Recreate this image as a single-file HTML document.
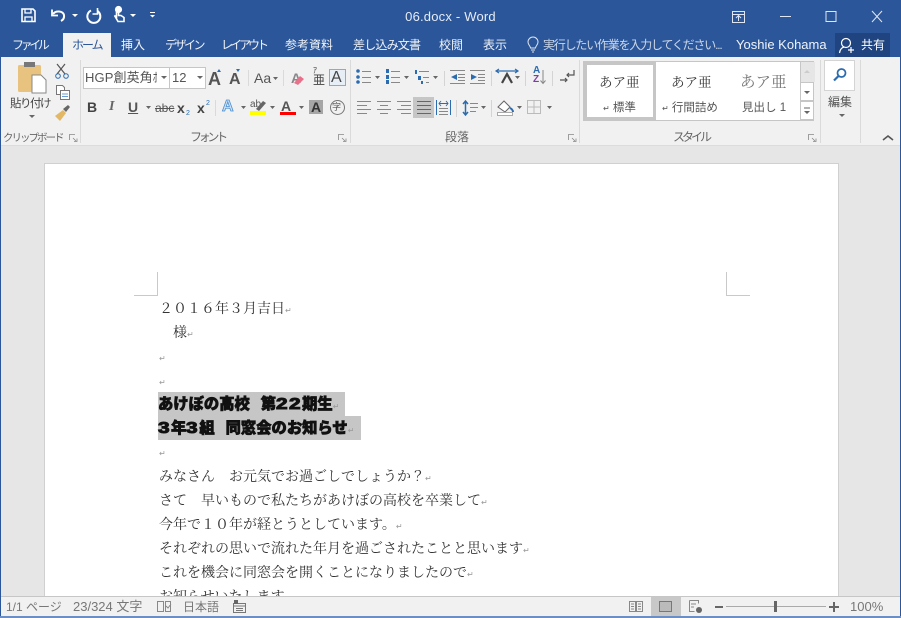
<!DOCTYPE html>
<html lang="ja"><head><meta charset="utf-8">
<style>
html,body{margin:0;padding:0}
body{width:901px;height:618px;overflow:hidden;position:relative;background:#e6e6e6;font-family:"Liberation Sans","Noto Sans CJK JP",sans-serif;font-size:12px;color:#444}
div,svg{position:absolute}
.t{white-space:nowrap;line-height:16px}
.tab{color:#fff;top:37px;font-size:12px;line-height:16px;white-space:nowrap;opacity:.93}
.m{font-family:"Liberation Serif","Noto Serif CJK SC",serif;font-size:14px;color:#333;left:159px;line-height:20px;white-space:nowrap}
.r{font-size:8px;color:#999;font-family:"Liberation Sans",sans-serif;font-weight:normal;-webkit-text-stroke:0}
.h{font-family:"Liberation Sans","Noto Sans CJK JP",sans-serif;font-weight:900;font-size:15.3px;color:#111;left:158px;line-height:24px;white-space:nowrap;-webkit-text-stroke:.7px #111}
.h b{display:inline-block;width:13px;font-size:16px;font-weight:bold;transform:scaleX(1.3);transform-origin:left center;-webkit-text-stroke:1px #111}
.h i{display:inline-block;width:11px}
.g{top:130px;font-size:12px;color:#666;line-height:14px;white-space:nowrap}
.sep{width:1px;background:#dadada}
.st{color:#777;font-size:12px;top:600px;line-height:14px;white-space:nowrap}
</style></head><body>
<div style="left:0;top:0;width:901px;height:57px;background:#2b579a"></div>
<div style="left:0;top:57px;width:901px;height:88px;background:#f1f1f1;border-bottom:1px solid #dcdcdc"></div>
<div style="left:0;top:57px;width:1px;height:561px;background:#2b579a"></div>
<div style="left:900px;top:57px;width:1px;height:561px;background:#2b579a"></div>

<!-- QAT -->
<svg style="left:0;top:0" width="180" height="30" fill="none" stroke="#fff" stroke-width="1.6">
<path d="M22 9h11l2 2v10.500H22z"/><path d="M25 9v4h6V9M25 21v-4h7v4" stroke-width="1.300"/>
<path d="M53 14c3-4 10-3 11 1 .5 3-1 5-3 6" stroke-width="2"/><path d="M52 9.500v6h6" stroke-width="1.800"/>
<path d="M72 14l3 3 3-3z" fill="#fff" stroke="none"/>
<path d="M91 10.500a6.500 6.500 0 1 0 6.500 .5" stroke-width="2"/><path d="M97.500 8v6h-5" stroke-width="1.600"/>
<path d="M116.500 9v8l-2-1.500 3.500 6h6v-4l-3-2h-2.500V9" stroke-width="1.600"/><circle cx="118.500" cy="9.500" r="2.800" fill="#fff"/>
<path d="M130 14l3 3 3-3z" fill="#fff" stroke="none"/>
<path d="M150 12.500h5" stroke-width="1"/><path d="M150 15h5l-2.500 2.500z" fill="#fff" stroke="none"/>
</svg>
<div class="t" style="left:0;width:901px;top:9px;text-align:center;color:#e6ecf5;font-size:13px;letter-spacing:.2px">06.docx - Word</div>
<svg style="left:725px;top:5px" width="176" height="24" fill="none" stroke="#dfe6f1" stroke-width="1">
<path d="M7.500 6.500h12v11h-12zM7.500 9.500h12M13.500 16v-5M11 13l2.500-2.500L16 13"/>
<path d="M55 11.500h11M101 6.500h10v10h-10zM147 6l10 11M157 6l-10 11"/>
</svg>

<!-- Tabs -->
<div style="left:63px;top:33px;width:48px;height:25px;background:#f1f1f1"></div>
<div class="tab" style="left:12px;letter-spacing:-3.400px">ファイル</div>
<div class="tab" style="left:72px;color:#2b579a;opacity:1;letter-spacing:-2px">ホーム</div>
<div class="tab" style="left:121px">挿入</div>
<div class="tab" style="left:165px;letter-spacing:-2.500px">デザイン</div>
<div class="tab" style="left:221px;letter-spacing:-3px">レイアウト</div>
<div class="tab" style="left:285px">参考資料</div>
<div class="tab" style="left:353px;letter-spacing:-.8px">差し込み文書</div>
<div class="tab" style="left:439px">校閲</div>
<div class="tab" style="left:483px">表示</div>
<svg style="left:525px;top:36px" width="16" height="18" fill="none" stroke="#dfe6f1" stroke-width="1"><path d="M5.500 12c0-2-2.500-3-2.500-6a5 5 0 0 1 10 0c0 3-2.500 4-2.500 6zM6 14h4M7 16h2"/></svg>
<div class="tab" style="left:543px;opacity:.75;letter-spacing:-1.200px">実行したい作業を入力してください...</div>
<div class="tab" style="left:736px;font-size:13px">Yoshie Kohama</div>
<div style="left:835px;top:33px;width:55px;height:24px;background:#1f4480"></div>
<svg style="left:838px;top:36px" width="20" height="20" fill="none" stroke="#fff" stroke-width="1.200"><circle cx="8" cy="7" r="4.500"/><path d="M1.500 17c.5-4 3-6 5-6M13 11v6M10 14h6"/></svg>
<div class="tab" style="left:861px;opacity:1">共有</div>

<!-- Clipboard group -->
<svg style="left:0;top:57px" width="80" height="70">
<rect x="18" y="8" width="23" height="27" rx="1.500" fill="#e8c27f"/><rect x="24" y="5" width="11" height="5" fill="#777"/>
<path d="M32 18h9l5 5v13H32z" fill="#fff" stroke="#888"/>
<path d="M29 58h6l-3 3z" fill="#666"/>
<g fill="none" stroke="#555"><path d="M57 7l8 10M65 7l-8 10" stroke-width="1.200"/><circle cx="58" cy="19" r="2.300" stroke="#2b6cb0"/><circle cx="66" cy="19" r="2.300" stroke="#2b6cb0"/>
<path d="M56.500 28.500h6l2 2v7h-8z" fill="#fff" stroke="#777"/><path d="M60.500 33.500h9v9h-9z" fill="#fff" stroke="#777"/><path d="M62 37h6M62 39.500h6" stroke="#6b9bd0"/></g>
<path d="M55 59l8-6 3 3-6 8z" fill="#e2b866"/><path d="M63 52l5-4 2 2-4 5z" fill="#666"/>
</svg>
<div class="t" style="left:10px;top:96px;font-size:11.500px;color:#444;letter-spacing:-1.500px">貼り付け</div>
<div class="g" style="left:3px;top:131px;font-size:10.500px;letter-spacing:-2px">クリップボード</div>
<div class="sep" style="left:80px;top:60px;height:83px"></div>
<svg style="left:69px;top:134px" width="9" height="9" fill="none" stroke="#888"><path d="M.5 6V.5H6M4 4l3 3M5 7.500h3v-3" stroke-width=".8"/></svg>

<!-- Font group -->
<div style="left:83px;top:67px;width:85px;height:20px;background:#fff;border:1px solid #c6c6c6"></div>
<div style="left:169px;top:67px;width:35px;height:20px;background:#fff;border:1px solid #c6c6c6"></div>
<div class="t" style="left:85px;top:70px;font-size:13px;width:72px;overflow:hidden;letter-spacing:.1px;color:#555">HGP創英角ﾎﾟ</div>
<div class="t" style="left:172px;top:70px;font-size:13px;color:#555">12</div>
<svg style="left:158px;top:74px" width="50" height="8" fill="#666"><path d="M3 2h6l-3 3zM39 2h6l-3 3z"/></svg>
<div class="t" style="left:208px;top:71px;font-size:18px;color:#555;font-weight:bold">A</div>
<div class="t" style="left:229px;top:72px;font-size:16px;color:#555;font-weight:bold">A</div>
<svg style="left:215px;top:68px" width="28" height="6"><path d="M2 4l2-3 2 3zM21 1l2 3 2-3z" fill="#2b6cb0"/></svg>
<div class="sep" style="left:248px;top:70px;height:16px"></div>
<div class="t" style="left:254px;top:70px;font-size:14px;color:#555">Aa</div>
<svg style="left:272px;top:76px" width="8" height="5"><path d="M1 1h5L3.500 4z" fill="#666"/></svg>
<div class="sep" style="left:283px;top:70px;height:16px"></div>
<div class="t" style="left:291px;top:70px;font-size:14px;color:#888;font-weight:bold">A</div>
<svg style="left:292px;top:74px" width="14" height="12"><path d="M2 9l6-7 4 3-6 6z" fill="#e8708a"/></svg>
<div class="t" style="left:313px;top:67px;font-size:8px;color:#444;line-height:8px">ｱ</div>
<div class="t" style="left:313px;top:74px;font-size:12px;color:#444;line-height:12px">亜</div>
<div style="left:329px;top:69px;width:15px;height:15px;border:1px solid #8ba9d3;background:#e8eef6"></div>
<div class="t" style="left:331px;top:69px;font-size:16px;line-height:17px;color:#444">A</div>

<div class="t" style="left:87px;top:99px;font-size:14px;font-weight:bold;color:#444">B</div>
<div class="t" style="left:109px;top:99px;font-size:14px;font-style:italic;font-weight:bold;color:#666;font-family:'Liberation Serif',serif">I</div>
<div class="t" style="left:128px;top:99px;font-size:14px;font-weight:bold;color:#555;text-decoration:underline">U</div>
<svg style="left:145px;top:105px" width="8" height="5"><path d="M1 1h5L3.500 4z" fill="#666"/></svg>
<div class="t" style="left:155px;top:100px;font-size:12px;color:#555;text-decoration:line-through">abc</div>
<div class="t" style="left:177px;top:100px;font-size:14px;font-weight:bold;color:#444">x</div>
<div class="t" style="left:186px;top:106px;font-size:7px;color:#2b6cb0">2</div>
<div class="t" style="left:197px;top:100px;font-size:14px;font-weight:bold;color:#444">x</div>
<div class="t" style="left:206px;top:96px;font-size:7px;color:#2b6cb0">2</div>
<div class="sep" style="left:215px;top:100px;height:16px"></div>
<div class="t" style="left:222px;top:99px;font-size:16px;color:#cfe0f3;font-weight:bold;-webkit-text-stroke:.8px #4a90d0">A</div>
<svg style="left:240px;top:105px" width="8" height="5"><path d="M1 1h5L3.500 4z" fill="#666"/></svg>
<div class="t" style="left:250px;top:97px;font-size:10px;color:#555">ab</div>
<svg style="left:250px;top:99px" width="17" height="12"><path d="M6 10l7-8 3 2-7 8z" fill="#666"/></svg>
<div style="left:250px;top:111px;width:16px;height:4px;background:#ff0"></div>
<svg style="left:269px;top:105px" width="8" height="5"><path d="M1 1h5L3.500 4z" fill="#666"/></svg>
<div class="t" style="left:281px;top:98px;font-size:14px;font-weight:bold;color:#555">A</div>
<div style="left:280px;top:112px;width:16px;height:3px;background:#f00"></div>
<svg style="left:298px;top:105px" width="8" height="5"><path d="M1 1h5L3.500 4z" fill="#666"/></svg>
<div style="left:309px;top:100px;width:14px;height:14px;background:#a6a6a6"></div>
<div class="t" style="left:311px;top:99px;font-size:14px;font-weight:bold;color:#333">A</div>
<div style="left:330px;top:100px;width:13px;height:13px;border:1px solid #777;border-radius:50%"></div>
<div class="t" style="left:332px;top:99px;font-size:9px;color:#555">字</div>
<div class="g" style="left:190px;letter-spacing:-3.300px">フォント</div>
<svg style="left:338px;top:134px" width="9" height="9" fill="none" stroke="#888"><path d="M.5 6V.5H6M4 4l3 3M5 7.500h3v-3" stroke-width=".8"/></svg>
<div class="sep" style="left:350px;top:60px;height:83px"></div>

<!-- Paragraph -->
<div style="left:413px;top:97px;width:21px;height:21px;background:#c6c6c6"></div>
<svg style="left:0;top:0" width="600" height="125" fill="none" stroke="#888" stroke-width="1">
<g fill="#2b6cb0" stroke="none">
<circle cx="358" cy="71" r="1.800"/><circle cx="358" cy="77" r="1.800"/><circle cx="358" cy="82" r="1.800"/>
<rect x="386" y="69" width="3" height="4"/><rect x="386" y="75" width="3" height="4"/><rect x="386" y="80" width="3" height="4"/>
<rect x="415" y="70" width="2" height="4"/><rect x="418" y="76" width="3" height="4"/><rect x="421" y="81" width="2" height="3"/>
<path d="M457 74v6l-6-3zM471 74v6l6-3z"/>
</g>
<path d="M362 71.500h9M362 77.500h9M362 82.500h9M391 71.500h9M391 77.500h9M391 82.500h9M419 71.500h10M423 77.500h6M426 82.500h3"/>
<path d="M450 70.500h15M458 74.500h7M458 77.500h7M458 80.500h7M450 83.500h15M470 70.500h15M478 74.500h7M478 77.500h7M478 80.500h7M470 83.500h15"/>
<path d="M497 71h20M499 69l-3 2 3 2M515 69l3 2-3 2" stroke="#2b6cb0" stroke-width="1.200"/>
<path d="M502 83l5-9 5 9" stroke="#444" stroke-width="2.200"/>
<path d="M543 70v13M540.500 80.500l2.500 3 2.500-3"/>
<path d="M567 75h7v-5M569 73l-2 2 2 2M560 80h7M565 78l2 2-2 2" stroke="#555" stroke-width="1.200"/>
<path d="M444.500 71v15M491.500 71v15M525.500 71v15M552.500 71v15M456.500 100v17M491.500 100v17" stroke="#d4d4d4"/>
<path d="M357 101.500h14M357 105.500h10M357 109.500h14M357 113.500h10"/>
<path d="M377 101.500h14M380 105.500h8M377 109.500h14M380 113.500h8"/>
<path d="M397 101.500h14M401 105.500h10M397 109.500h14M401 113.500h10"/>
<path d="M417 101.500h14M417 105.500h14M417 109.500h14M417 113.500h14" stroke="#666"/>
<path d="M436.500 100v15M450.500 100v15" stroke="#2b6cb0"/>
<path d="M439 103.500h9M441 101l-2 2.500 2 2.500M446 101l2 2.500-2 2.500" stroke="#2b6cb0" stroke-width=".9"/>
<path d="M439 108.500h9M439 111.500h9M439 114.500h9"/>
<path d="M465.500 101v14M463 104l2.500-3 2.500 3M463 112l2.500 3 2.500-3" stroke="#2b6cb0" stroke-width="1.500"/>
<path d="M470 103.500h8M470 107.500h8M470 111.500h6"/>
<path d="M498 107l6-6 6 6-5 5z" fill="#fff" stroke="#666"/><path d="M510 108c2 1 3 2 3 4" stroke="#2b6cb0" stroke-width="2"/>
<rect x="497.500" y="112.500" width="15" height="3" fill="#fff" stroke="#aaa"/>
<path d="M527.500 100.500h13v13h-13zM534 100v14M527 107h14" stroke="#bbb"/>
<g fill="#666" stroke="none"><path d="M375 76h5l-2.500 3zM404 76h5l-2.500 3zM433 76h5l-2.500 3zM515 76h5l-2.500 3zM481 106h5l-2.500 3zM517 106h5l-2.500 3zM547 106h5l-2.500 3z"/></g>
</svg>
<div class="t" style="left:533px;top:66px;font-size:10px;line-height:10px;font-weight:bold;color:#2b6cb0">A</div>
<div class="t" style="left:533px;top:75px;font-size:10px;line-height:10px;font-weight:bold;color:#7a3fa0">Z</div>
<div class="g" style="left:445px">段落</div>
<svg style="left:568px;top:134px" width="9" height="9" fill="none" stroke="#888"><path d="M.5 6V.5H6M4 4l3 3M5 7.500h3v-3" stroke-width=".8"/></svg>
<div class="sep" style="left:579px;top:60px;height:83px"></div>

<!-- Styles -->
<div style="left:583px;top:61px;width:231px;height:60px;background:#fff;border:1px solid #c6c6c6;box-sizing:border-box"></div>
<div style="left:584px;top:62px;width:72px;height:58px;box-sizing:border-box;border:3px solid #c6c6c6;background:#fff"></div>
<div class="t" style="left:599px;top:75px;font-size:13.500px;color:#333;font-family:'Liberation Serif','Noto Serif CJK SC',serif">あア亜</div>
<div class="t" style="left:603px;top:100px;font-size:11.500px;color:#555"><span style="font-size:8px">↵</span> 標準</div>
<div class="t" style="left:671px;top:75px;font-size:13.500px;color:#333;font-family:'Liberation Serif','Noto Serif CJK SC',serif">あア亜</div>
<div class="t" style="left:662px;top:100px;font-size:11.500px;color:#555"><span style="font-size:8px">↵</span> 行間詰め</div>
<div class="t" style="left:740px;top:75px;font-size:15.500px;color:#777;font-family:'Liberation Serif','Noto Serif CJK SC',serif">あア亜</div>
<div class="t" style="left:742px;top:100px;font-size:11.500px;color:#555">見出し 1</div>
<div style="left:800px;top:62px;width:14px;height:20px;background:#e6e6e6;border-left:1px solid #c6c6c6"></div>
<div style="left:800px;top:82px;width:14px;height:19px;background:#fff;border:1px solid #c6c6c6;box-sizing:border-box"></div>
<div style="left:800px;top:101px;width:14px;height:19px;background:#fff;border:1px solid #c6c6c6;box-sizing:border-box"></div>
<svg style="left:800px;top:62px" width="14" height="58"><path d="M4 11l3-3 3 3z" fill="#ccc"/><path d="M4 29h6l-3 3zM4 49h6l-3 3z" fill="#666"/><path d="M4 46h6" stroke="#666"/></svg>
<div class="g" style="left:673px;letter-spacing:-3px">スタイル</div>
<svg style="left:808px;top:134px" width="9" height="9" fill="none" stroke="#888"><path d="M.5 6V.5H6M4 4l3 3M5 7.500h3v-3" stroke-width=".8"/></svg>
<div class="sep" style="left:820px;top:60px;height:83px"></div>

<!-- Edit -->
<div style="left:824px;top:60px;width:31px;height:31px;box-sizing:border-box;background:#fff;border:1px solid #d4d4d4"></div>
<svg style="left:832px;top:67px" width="16" height="16" fill="none" stroke="#2b6cb0" stroke-width="1.800"><circle cx="9.500" cy="6" r="4"/><path d="M6.500 9l-4.500 4.500" stroke-width="2.200"/></svg>
<div class="t" style="left:828px;top:94px;font-size:12px;color:#555">編集</div>
<svg style="left:838px;top:113px" width="9" height="6"><path d="M1 1h6L4 4z" fill="#666"/></svg>
<div class="sep" style="left:860px;top:60px;height:83px"></div>
<svg style="left:881px;top:133px" width="14" height="9" fill="none" stroke="#555" stroke-width="1.600"><path d="M2 7l5-4 5 4"/></svg>

<!-- Page -->
<div style="left:45px;top:164px;width:793px;height:432px;background:#fff;box-shadow:0 0 0 1px #d0d0d0"></div>
<svg style="left:130px;top:268px" width="640" height="32" fill="none" stroke="#c9c9c9"><path d="M27.500 4v23.500H4M596.500 4v23.500H620"/></svg>

<div class="m" style="top:300px">２０１６年３月吉日<span class="r">↵</span></div>
<div class="m" style="top:324px;left:173px">様<span class="r">↵</span></div>
<div class="m" style="top:348px"><span class="r">↵</span></div>
<div class="m" style="top:372px"><span class="r">↵</span></div>
<div style="left:158px;top:392px;width:187px;height:24px;background:#c6c6c6"></div>
<div style="left:158px;top:416px;width:203px;height:24px;background:#c6c6c6"></div>
<div class="h" style="top:393px">あけぼの高校<i></i>第<b>2</b><b>2</b>期生<span class="r">↵</span></div>
<div class="h" style="top:417px"><b>3</b>年<b>3</b>組<i></i>同窓会のお知らせ<span class="r">↵</span></div>
<div class="m" style="top:443px"><span class="r">↵</span></div>
<div class="m" style="top:468px">みなさん　お元気でお過ごしでしょうか？<span class="r">↵</span></div>
<div class="m" style="top:492px">さて　早いもので私たちがあけぼの高校を卒業して<span class="r">↵</span></div>
<div class="m" style="top:516px">今年で１０年が経とうとしています。<span class="r">↵</span></div>
<div class="m" style="top:540px">それぞれの思いで流れた年月を過ごされたことと思います<span class="r">↵</span></div>
<div class="m" style="top:564px">これを機会に同窓会を開くことになりましたので<span class="r">↵</span></div>
<div class="m" style="top:588px">お知らせいたします。</div>

<!-- Status bar -->
<div style="left:1px;top:596px;width:899px;height:22px;background:#f1f1f1;border-top:1px solid #c6c6c6;box-sizing:border-box"></div>
<div style="left:0;top:616px;width:901px;height:2px;background:#6b8fc4"></div>
<div class="st" style="left:6px">1/1 ページ</div>
<div class="st" style="left:73px;font-size:13px">23/324 文字</div>
<svg style="left:156px;top:600px" width="16" height="13" fill="none" stroke="#888"><path d="M1.500 1.500h6v10h-6zM9.500 1.500h5v10h-5zM10 6l2 2 3-4"/></svg>
<div class="st" style="left:183px">日本語</div>
<svg style="left:232px;top:600px" width="15" height="13" fill="none" stroke="#777"><rect x="1.500" y="3.500" width="12" height="9"/><path d="M1.500 6h12M4 8.500h7M4 10.500h7"/><rect x="2" y="0" width="4" height="4" fill="#666" stroke="none"/></svg>
<div style="left:651px;top:597px;width:30px;height:19px;background:#c8c8c8"></div>
<svg style="left:628px;top:599px" width="80" height="15" fill="none" stroke="#888"><path d="M1.500 2.500h6v10h-6zM8.500 2.500h6v10h-6zM3 5h3M3 7.500h3M3 10h3M10 5h3M10 7.500h3M10 10h3"/><rect x="31.500" y="2.500" width="12" height="10" fill="#bbb" stroke="#777"/><path d="M61.500 1.500h9v3M61.500 1.500v11h5M63 5h5M63 8h3"/><circle cx="71" cy="11" r="3" fill="#666" stroke="none"/></svg>
<div style="left:726px;top:606px;width:100px;height:1px;background:#aaa"></div>
<div style="left:715px;top:606px;width:8px;height:2px;background:#666"></div>
<div style="left:774px;top:601px;width:3px;height:11px;background:#666"></div>
<div style="left:829px;top:606px;width:10px;height:2px;background:#666"></div>
<div style="left:833px;top:602px;width:2px;height:10px;background:#666"></div>
<div class="st" style="left:850px;font-size:13px">100%</div>
</body></html>
